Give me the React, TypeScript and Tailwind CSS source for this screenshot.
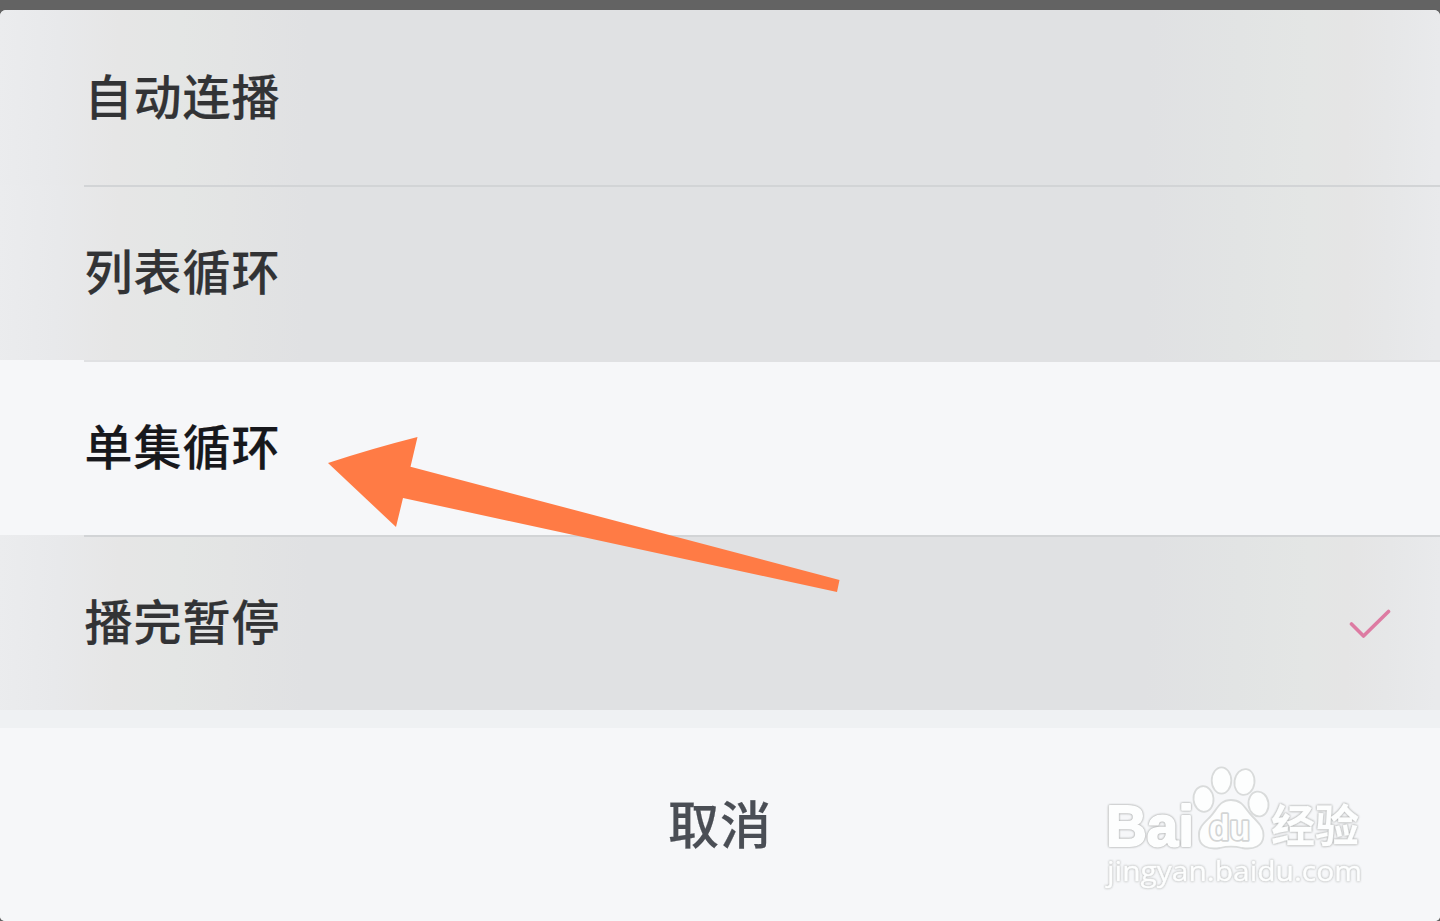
import clsx from 'clsx';

const OPTIONS = [
  { label: '自动连播' },
  { label: '列表循环' },
  { label: '单集循环', highlighted: true },
  { label: '播完暂停', checked: true },
];

function CheckMark() {
  return (
    <svg className="mt-[2px] h-[30px] w-[42px]" viewBox="0 0 42 30" fill="none">
      <path d="M2.5 15 L14.5 27 L39.5 2.5" stroke="#dd7ba2" strokeWidth="3.6" strokeLinecap="round" strokeLinejoin="round" />
    </svg>
  );
}

function OptionRow({ label, highlighted, checked }: { label: string; highlighted?: boolean; checked?: boolean }) {
  return (
    <div
      className={clsx(
        'flex h-[175px] shrink-0 items-center justify-between pr-[49px] pl-[84.5px]',
        highlighted
          ? 'bg-[#f6f7f9] text-[#17181c]'
          : 'bg-[linear-gradient(92deg,#ebecee_0px,#e8e9eb_60px,#e6e6e6_120px,#e4e6e5_180px,#e3e4e4_230px,#e0e1e3_310px,#e0e1e3_1150px,#e2e4e4_1240px,#e4e6e5_1310px,#e5e5e5_1350px,#e6e7e8_1390px,#e9eaec_1440px)] text-[#323335]',
      )}
    >
      <span className="pb-[8px] text-[48px] leading-none font-medium tracking-[1px] [-webkit-text-stroke:0.2px_currentColor]">
        {label}
      </span>
      {checked && <CheckMark />}
    </div>
  );
}

function Divider({ faint }: { faint?: boolean }) {
  return <div className={clsx('relative z-10 -mb-[2px] ml-[84px] h-[2px] shrink-0', faint ? 'bg-[#e0e1e3]' : 'bg-[#d2d4d6]')} />;
}

function Arrow() {
  return (
    <svg className="absolute top-[430px] left-[320px] z-20 h-[170px] w-[530px]" viewBox="320 430 530 170">
      <path d="M328 463 Q372 448.500 417.500 437 L410.500 466.700 L839.500 580 L837 592 L403 498 L396 527 Z" fill="#ff7b45" />
    </svg>
  );
}

function Watermark() {
  return (
    <svg
      className="absolute top-[750px] left-[1080px] h-[160px] w-[300px]"
      viewBox="0 0 300 160"
      fill="#fdfefe"
      stroke="#d9dbdb"
      strokeLinejoin="round"
    >
      <g strokeWidth="1.8">
        <ellipse cx="123.5" cy="49" rx="10" ry="12.8" transform="rotate(-5 123.5 49)" />
        <ellipse cx="141.5" cy="30.5" rx="9.8" ry="13.2" />
        <ellipse cx="164.5" cy="32" rx="10" ry="13" transform="rotate(8 164.5 32)" />
        <ellipse cx="178.5" cy="54" rx="10" ry="12.5" transform="rotate(-8 178.5 54)" />
        <path d="M151 50 C163 50 165 59 172 66 C179 73 184 78 183.5 86 C183 96 174 100 162 98 C154 96 148 96 140 98 C128 100 119 96 119 86 C118 78 124 73 130 67 C137 60 139 50 151 50 Z" />
      </g>
      <g stroke="#fdfefe" strokeWidth="2" className="[filter:drop-shadow(0_0_0.8px_#a9abab)_drop-shadow(0_0_0.6px_#c8caca)]">
        <text x="26" y="96" fontSize="58" fontWeight="700" textLength="88" lengthAdjust="spacingAndGlyphs" className="font-['Liberation_Sans']">Bai</text>
        <text x="191" y="92" fontSize="44" fontWeight="700" textLength="88" lengthAdjust="spacingAndGlyphs" strokeWidth="0.3" className="font-['Noto_Sans_CJK_SC']">经验</text>
      </g>
      <text x="129" y="90" fontSize="35" fontWeight="700" textLength="41" lengthAdjust="spacingAndGlyphs" stroke="#d3d5d5" strokeWidth="3.6" paintOrder="stroke" className="font-['Liberation_Sans']">du</text>
      <g strokeWidth="0.5" stroke="#fdfefe" className="[filter:drop-shadow(0_0_0.8px_#bfc1c1)_drop-shadow(0_0_0.6px_#d0d2d2)]">
        <text x="27" y="131" fontSize="28" textLength="255" lengthAdjust="spacingAndGlyphs" className="font-['Open_Sans']">jingyan.baidu.com</text>
      </g>
    </svg>
  );
}

export default function App() {
  return (
    <div className="relative flex h-[921px] w-[1440px] flex-col overflow-hidden bg-[#636363] pt-[10px] font-['Noto_Sans_CJK_SC',sans-serif]">
      <div className="flex flex-1 flex-col overflow-hidden rounded-t-[6px] rounded-b-[5px] bg-[#eff1f3]">
        {OPTIONS.map((option, index) => (
          <div key={option.label} className="flex flex-col">
            {index > 0 && <Divider faint={index === 2} />}
            <OptionRow {...option} />
          </div>
        ))}
        <div className="mt-[18px] flex flex-1 items-center justify-center bg-[#f6f7f9]">
          <span className="pb-[4px] text-[51px] leading-none font-medium tracking-[1px] text-[#4a4e55] [-webkit-text-stroke:0.2px_currentColor]">
            取消
          </span>
        </div>
      </div>
      <Arrow />
      <Watermark />
    </div>
  );
}
